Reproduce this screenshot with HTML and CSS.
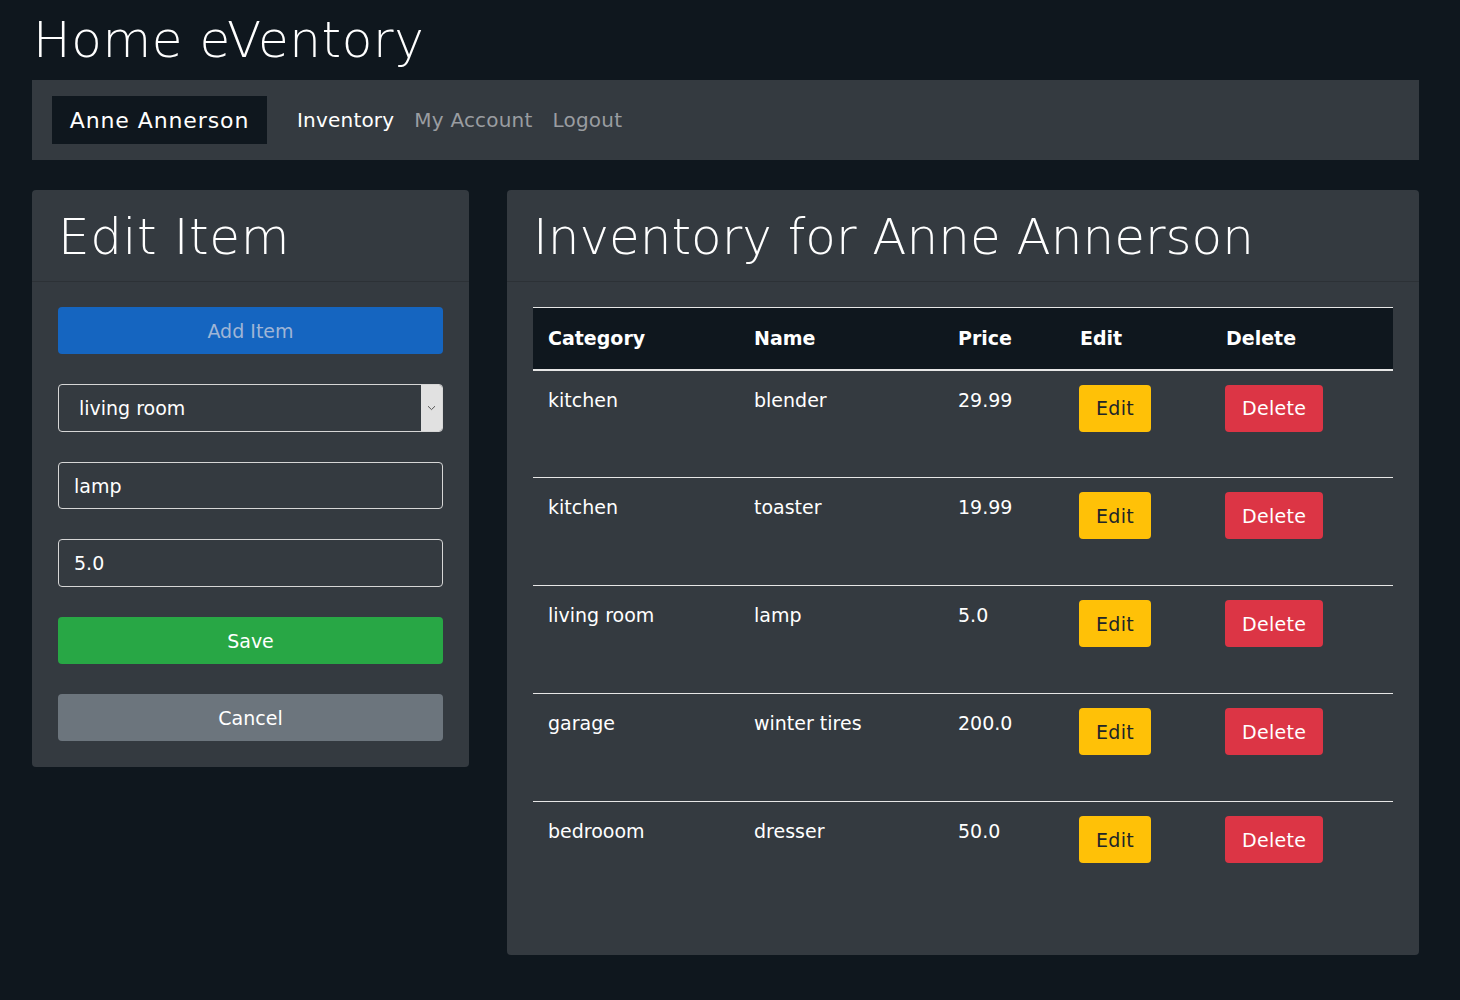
FILE: index.html
```html
<!DOCTYPE html>
<html>
<head>
<meta charset="utf-8">
<link rel="stylesheet" href="styles.css">
</head>
<body>
<div class="page">
  <h1 class="site-title">Home eVentory</h1>
  <nav class="navbar">
    <span class="brand">Anne Annerson</span>
    <a class="nav-link active">Inventory</a>
    <a class="nav-link">My Account</a>
    <a class="nav-link">Logout</a>
  </nav>
  <div class="main">
    <section class="card card-edit">
      <div class="card-header"><h2>Edit Item</h2></div>
      <div class="card-body">
        <button class="btn btn-blue">Add Item</button>
        <div class="select">
          <span class="select-text">living room</span>
          <span class="select-arrow"><svg width="9" height="6" viewBox="0 0 9 6"><path d="M1 1.2 L4.5 4.6 L8 1.2" fill="none" stroke="#555" stroke-width="1"/></svg></span>
        </div>
        <div class="input">lamp</div>
        <div class="input input-tall">5.0</div>
        <button class="btn btn-green">Save</button>
        <button class="btn btn-grey">Cancel</button>
      </div>
    </section>
    <section class="card card-inv">
      <div class="card-header"><h2>Inventory for Anne Annerson</h2></div>
      <div class="card-body">
        <table class="table">
          <colgroup>
            <col class="c-cat"><col class="c-name"><col class="c-price"><col class="c-edit"><col>
          </colgroup>
          <thead>
            <tr><th>Category</th><th>Name</th><th>Price</th><th>Edit</th><th>Delete</th></tr>
          </thead>
          <tbody>
            <tr><td>kitchen</td><td>blender</td><td>29.99</td><td><button class="sbtn sbtn-edit">Edit</button></td><td><button class="sbtn sbtn-del">Delete</button></td></tr>
            <tr><td>kitchen</td><td>toaster</td><td>19.99</td><td><button class="sbtn sbtn-edit">Edit</button></td><td><button class="sbtn sbtn-del">Delete</button></td></tr>
            <tr><td>living room</td><td>lamp</td><td>5.0</td><td><button class="sbtn sbtn-edit">Edit</button></td><td><button class="sbtn sbtn-del">Delete</button></td></tr>
            <tr><td>garage</td><td>winter tires</td><td>200.0</td><td><button class="sbtn sbtn-edit">Edit</button></td><td><button class="sbtn sbtn-del">Delete</button></td></tr>
            <tr><td>bedrooom</td><td>dresser</td><td>50.0</td><td><button class="sbtn sbtn-edit">Edit</button></td><td><button class="sbtn sbtn-del">Delete</button></td></tr>
          </tbody>
        </table>
      </div>
    </section>
  </div>
</div>
</body>
</html>
```
FILE: styles.css
```css
* { box-sizing: border-box; }
html, body { margin: 0; padding: 0; }
body {
  background: #0f171e;
  color: #fff;
  font-family: "DejaVu Sans", "Open Sans", sans-serif;
  font-size: 19px;
}
.page {
  padding: 0 41px 0 32px;
}
.site-title {
  margin: 0;
  height: 80px;
  padding: 10px 0 0 1px;
  font-weight: 300;
  font-size: 50px;
  line-height: 60px;
  letter-spacing: 0.6px;
}
.navbar {
  background: #343a40;
  height: 80px;
  display: flex;
  align-items: center;
  padding: 0 20px;
}
.brand {
  background: #0f171e;
  height: 48px;
  width: 215px;
  display: flex;
  align-items: center;
  justify-content: center;
  font-size: 22px;
  letter-spacing: 0.9px;
  margin-right: 20px;
}
.nav-link {
  font-size: 20px;
  color: #9a9da1;
  padding: 0 10px;
  letter-spacing: 0.2px;
}
.nav-link.active { color: #fff; }
.main {
  display: flex;
  align-items: flex-start;
  gap: 38px;
  margin-top: 30px;
}
.card {
  background: #343a40;
  border-radius: 4px;
}
.card-edit { width: 437px; }
.card-inv { flex: 1; min-height: 765px; }
.card-header {
  height: 92px;
  border-bottom: 1px solid #2c3136;
  padding: 14px 26px 0 26px;
}
.card-header h2 {
  margin: 0;
  font-weight: 300;
  font-size: 50px;
  line-height: 66px;
}
.card-edit .card-header h2 { letter-spacing: 0.6px; }
.card-body { padding: 25px 26px 26px; }
.card-edit .card-body { display: flex; flex-direction: column; gap: 30px; }
.btn {
  display: block;
  width: 100%;
  height: 47px;
  border: none;
  border-radius: 4px;
  font-family: inherit;
  font-size: 19px;
  color: #fff;
}
.btn-blue { background: #1565c0; color: #9fb5d6; }
.btn-green { background: #28a745; }
.btn-grey { background: #6c757d; }
.select {
  height: 48px;
  border: 1px solid #d6d6d6;
  border-radius: 4px;
  display: flex;
  overflow: hidden;
}
.select-text {
  flex: 1;
  display: flex;
  align-items: center;
  padding-left: 20px;
}
.select-arrow {
  width: 21px;
  background: #e1e1e1;
  display: flex;
  align-items: center;
  justify-content: center;
}
.input {
  height: 47px;
  border: 1px solid #d6d6d6;
  border-radius: 4px;
  display: flex;
  align-items: center;
  padding-left: 15px;
}
.input-tall { height: 48px; }
.table {
  width: 100%;
  border-collapse: collapse;
  table-layout: fixed;
}
.c-cat { width: 206px; }
.c-name { width: 204px; }
.c-price { width: 122px; }
.c-edit { width: 146px; }
.table thead tr {
  background: #0f171e;
  border-top: 1px solid #e6e6e6;
  border-bottom: 2px solid #e6e6e6;
}
.table th {
  text-align: left;
  font-weight: 600;
  height: 62px;
  padding: 0 15px;
  font-size: 19px;
}
.table tbody tr { border-bottom: 1px solid #e6e6e6; }
.table tbody tr:last-child { border-bottom: none; }
.table td {
  height: 108px;
  vertical-align: top;
  padding: 18px 15px 0 15px;
  font-size: 19px;
}
.table td:nth-child(4), .table td:nth-child(5) { padding-left: 14px; padding-top: 14px; }
.sbtn {
  height: 47px;
  border: none;
  border-radius: 4px;
  font-family: inherit;
  font-size: 19px;
  padding: 0 17px;
  letter-spacing: 0.3px;
}
.sbtn-edit { background: #ffc107; color: #212529; }
.sbtn-del { background: #dc3545; color: #fff; }
```
